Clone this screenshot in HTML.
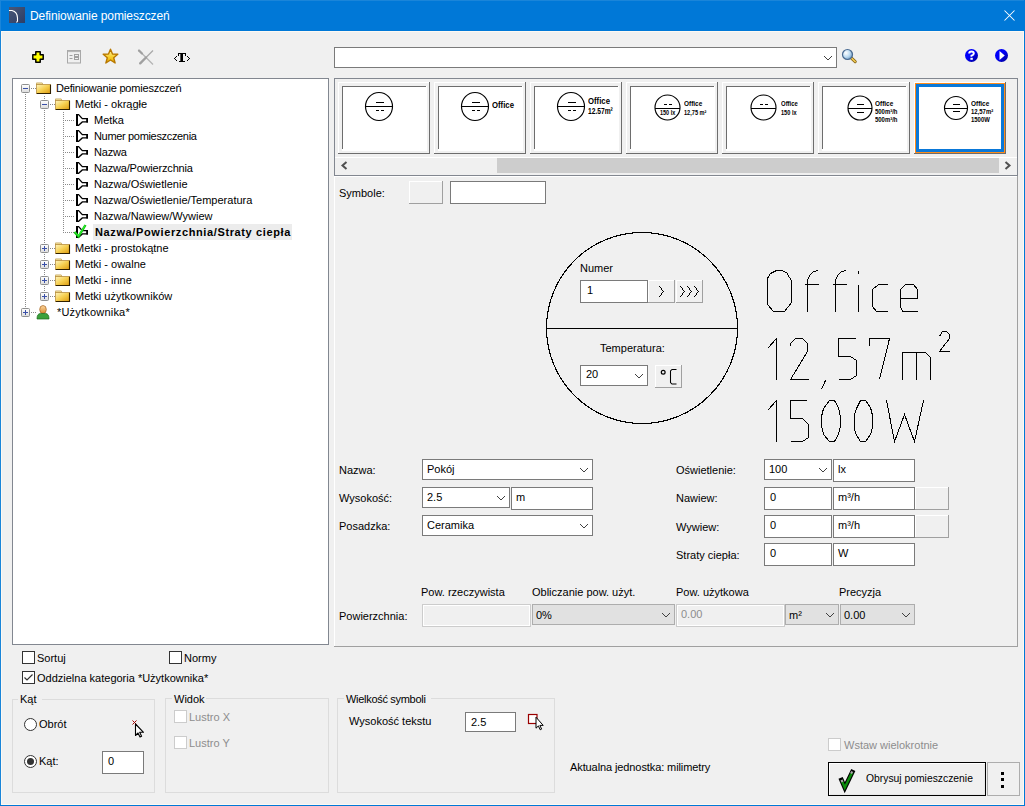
<!DOCTYPE html><html><head><meta charset="utf-8"><style>
html,body{margin:0;padding:0;}
body{width:1025px;height:806px;position:relative;overflow:hidden;background:#f0f0f0;font-family:"Liberation Sans",sans-serif;}
.t{position:absolute;white-space:nowrap;line-height:13px;font-family:"Liberation Sans",sans-serif;}
.b{position:absolute;box-sizing:border-box;}
svg.b{overflow:visible;}
</style></head><body>
<div class="b" style="left:0px;top:0px;width:1025px;height:31px;background:#0078d7;"></div>
<div class="b" style="left:1px;top:31px;width:1023px;height:774px;background:#fdf9f3;"></div>
<div class="b" style="left:2px;top:32px;width:1021px;height:772px;background:#f0f0f0;"></div>
<div class="b" style="left:0px;top:0px;width:1025px;height:1px;background:#1a85d9;"></div>
<div class="b" style="left:0px;top:0px;width:1px;height:806px;background:#1a85d9;"></div>
<div class="b" style="left:1024px;top:0px;width:1px;height:806px;background:#0078d7;"></div>
<div class="b" style="left:0px;top:805px;width:1025px;height:1px;background:#0078d7;"></div>
<svg class="b" style="left:9px;top:7px" width="17" height="17"><defs><linearGradient id="ai" x1="0" y1="0" x2="1" y2="1"><stop offset="0" stop-color="#4a5878"/><stop offset="1" stop-color="#2c3d66"/></linearGradient></defs><rect x="0" y="0" width="16" height="16" fill="url(#ai)"/><path d="M0 3.5 H3 Q8.5 5 8.5 11 V14 L7.5 15.5" fill="none" stroke="#fff" stroke-width="1.1"/></svg>
<div class="t" style="left:30px;top:10px;font-size:12px;color:#fff;letter-spacing:-0.1px">Definiowanie pomieszczeń</div>
<svg class="b" style="left:1004px;top:10px" width="11" height="11"><path d="M0.5 0.5 L10.5 10.5 M10.5 0.5 L0.5 10.5" stroke="#fff" stroke-width="1.05"/></svg>
<svg class="b" style="left:32px;top:51px" width="13" height="13"><path d="M3.8 0.8 H8.2 V3.8 H11.2 V8.2 H8.2 V11.2 H3.8 V8.2 H0.8 V3.8 H3.8 Z" fill="#ffff00" stroke="#000" stroke-width="1.5" stroke-linejoin="round"/></svg>
<svg class="b" style="left:67px;top:50px" width="15" height="14"><rect x="0.5" y="0.5" width="13" height="12.5" fill="none" stroke="#a8a8a8" stroke-width="1"/><path d="M1 1.5 H13" stroke="#b8b8b8" stroke-width="1.2"/><path d="M2.5 5.5 H5.5 M2.5 8.5 H5.5" stroke="#a0a0a0" stroke-width="1"/><rect x="7.5" y="4.5" width="4" height="2" fill="none" stroke="#a0a0a0" stroke-width="1"/><rect x="7.5" y="7.5" width="4" height="2" fill="none" stroke="#a0a0a0" stroke-width="1"/></svg>
<svg class="b" style="left:102px;top:48px" width="17" height="17"><defs><linearGradient id="st" x1="0" y1="0" x2="0" y2="1"><stop offset="0" stop-color="#fff8b0"/><stop offset="0.55" stop-color="#f8d030"/><stop offset="1" stop-color="#e8a800"/></linearGradient></defs><path d="M8.5 1.2 L10.5 6 L15.8 6.3 L11.7 9.7 L13.1 15 L8.5 12 L3.9 15 L5.3 9.7 L1.2 6.3 L6.5 6 Z" fill="url(#st)" stroke="#b87800" stroke-width="1.4" stroke-linejoin="round"/></svg>
<svg class="b" style="left:137px;top:49px" width="18" height="17"><path d="M2 1.5 L16 15.5" stroke="#b4b4b4" stroke-width="1.2"/><path d="M16 1.5 L9 8.5" stroke="#a8a8a8" stroke-width="1.2"/><path d="M9 8.5 L3.2 14.3" stroke="#a0a0a0" stroke-width="2.4" stroke-linecap="round"/><path d="M2 1.5 L5 4.5" stroke="#a0a0a0" stroke-width="2.2" stroke-linecap="round"/></svg>
<svg class="b" style="left:173px;top:52px" width="19" height="12" shape-rendering="crispEdges"><path d="M3 4h1v1h-1z M2 5h1v1h-1z M1 6h1v1h-1z M2 7h1v1h-1z M3 8h1v1h-1z" fill="#000"/><path d="M14 4h1v1h-1z M15 5h1v1h-1z M16 6h1v1h-1z M15 7h1v1h-1z M14 8h1v1h-1z" fill="#000"/><path d="M5 1h8v1h-8z M5 2h1v2h-1z M12 2h1v2h-1z M8 2h2v7h-2z M6 9h6v1h-6z" fill="#000"/><path d="M7 2h1v7h-1z" fill="#555"/></svg>
<div class="b" style="left:334px;top:47px;width:503px;height:21px;background:#fff;border:1px solid #7a7a7a;"></div>
<svg class="b" style="left:0;top:0" width="1025" height="806"><path d="M824 56h1v1h-1z M831 56h1v1h-1z M825 57h1v1h-1z M830 57h1v1h-1z M826 58h1v1h-1z M829 58h1v1h-1z M827 59h1v1h-1z M828 59h1v1h-1z " fill="#404040"/></svg>
<svg class="b" style="left:840px;top:48px" width="18" height="17"><defs><radialGradient id="mg" cx="0.35" cy="0.35" r="0.7"><stop offset="0" stop-color="#ffffff"/><stop offset="0.6" stop-color="#b8d8f0"/><stop offset="1" stop-color="#6f98c0"/></radialGradient></defs><path d="M11.2 9.8 L15.2 13.6" stroke="#7a5a10" stroke-width="3" stroke-linecap="round"/><path d="M11.2 9.8 L15.2 13.6" stroke="#f0c850" stroke-width="1.6" stroke-linecap="round"/><circle cx="7.5" cy="6.5" r="5" fill="url(#mg)" stroke="#4a6a90" stroke-width="1.2"/></svg>
<svg class="b" style="left:964px;top:48px" width="16" height="16"><defs><linearGradient id="hb" x1="0" y1="0" x2="1" y2="1"><stop offset="0.45" stop-color="#0000f8"/><stop offset="1" stop-color="#00008a"/></linearGradient></defs><circle cx="7.5" cy="7.5" r="6.5" fill="url(#hb)"/><path d="M5.2 5.6 Q5.2 3.4 7.5 3.4 Q9.8 3.4 9.8 5.4 Q9.8 6.8 7.5 7.6 V8.8" fill="none" stroke="#fff" stroke-width="2"/><rect x="6.4" y="9.8" width="2.4" height="2" fill="#fff"/></svg>
<svg class="b" style="left:994px;top:48px" width="16" height="16"><defs><linearGradient id="pb" x1="0" y1="0" x2="1" y2="1"><stop offset="0.45" stop-color="#0000f8"/><stop offset="1" stop-color="#00008a"/></linearGradient></defs><circle cx="7.5" cy="7.5" r="6.5" fill="url(#pb)"/><path d="M5.5 3 L10.8 7.5 L5.5 12 Z" fill="#fff"/></svg>
<div class="b" style="left:12px;top:78px;width:317px;height:567px;background:#fff;border:1px solid #828790;"></div>
<div class="b" style="left:25px;top:94px;width:1px;height:219px;background:repeating-linear-gradient(to bottom,#8a8a8a 0 1px,transparent 1px 2px)"></div>
<div class="b" style="left:44px;top:96px;width:1px;height:201px;background:repeating-linear-gradient(to bottom,#8a8a8a 0 1px,transparent 1px 2px)"></div>
<div class="b" style="left:63px;top:112px;width:1px;height:121px;background:repeating-linear-gradient(to bottom,#8a8a8a 0 1px,transparent 1px 2px)"></div>
<div class="b" style="left:31px;top:88px;width:5px;height:1px;background:repeating-linear-gradient(to right,#8a8a8a 0 1px,transparent 1px 2px)"></div>
<svg class="b" style="left:21px;top:84px" width="9" height="9"><defs><linearGradient id="eb88" x1="0" y1="0" x2="0" y2="1"><stop offset="0" stop-color="#ffffff"/><stop offset="1" stop-color="#dcdcdc"/></linearGradient></defs><rect x="0.5" y="0.5" width="8" height="8" rx="1" fill="url(#eb88)" stroke="#8e8f8f" stroke-width="1"/><path d="M2 4.5 H7" stroke="#3a50a8" stroke-width="1"/></svg>
<svg class="b" style="left:36px;top:82px" width="16" height="13"><defs><linearGradient id="fd" x1="0" y1="0" x2="1" y2="1"><stop offset="0" stop-color="#fff6c0"/><stop offset="0.5" stop-color="#f6cf50"/><stop offset="1" stop-color="#dc9a10"/></linearGradient></defs><path d="M0.5 2.5 V0.9 H6.2 L7 2.5 Z" fill="#f4e4a0" stroke="#c8a860" stroke-width="0.8"/><rect x="0.5" y="2.5" width="14" height="9" fill="url(#fd)" stroke="#b89040" stroke-width="0.8"/><path d="M14.5 2.8 V11.5 H0.8" fill="none" stroke="#302000" stroke-width="1.1"/></svg>
<div class="t" style="left:56px;top:82px;font-size:11px;color:#000;letter-spacing:-0.2px">Definiowanie pomieszczeń</div>
<div class="b" style="left:50px;top:104px;width:5px;height:1px;background:repeating-linear-gradient(to right,#8a8a8a 0 1px,transparent 1px 2px)"></div>
<svg class="b" style="left:40px;top:100px" width="9" height="9"><defs><linearGradient id="eb104" x1="0" y1="0" x2="0" y2="1"><stop offset="0" stop-color="#ffffff"/><stop offset="1" stop-color="#dcdcdc"/></linearGradient></defs><rect x="0.5" y="0.5" width="8" height="8" rx="1" fill="url(#eb104)" stroke="#8e8f8f" stroke-width="1"/><path d="M2 4.5 H7" stroke="#3a50a8" stroke-width="1"/></svg>
<svg class="b" style="left:55px;top:98px" width="16" height="13"><defs><linearGradient id="fd" x1="0" y1="0" x2="1" y2="1"><stop offset="0" stop-color="#fff6c0"/><stop offset="0.5" stop-color="#f6cf50"/><stop offset="1" stop-color="#dc9a10"/></linearGradient></defs><path d="M0.5 2.5 V0.9 H6.2 L7 2.5 Z" fill="#f4e4a0" stroke="#c8a860" stroke-width="0.8"/><rect x="0.5" y="2.5" width="14" height="9" fill="url(#fd)" stroke="#b89040" stroke-width="0.8"/><path d="M14.5 2.8 V11.5 H0.8" fill="none" stroke="#302000" stroke-width="1.1"/></svg>
<div class="t" style="left:75px;top:98px;font-size:11px;color:#000;">Metki - okrągłe</div>
<div class="b" style="left:65px;top:120px;width:9px;height:1px;background:repeating-linear-gradient(to right,#8a8a8a 0 1px,transparent 1px 2px)"></div>
<svg class="b" style="left:75px;top:113px" width="14" height="14"><path d="M1.8 1.65 H3.6 L7.3 5.65 H12.1 V8.9 H7.3 L3.6 12.35 H1.8 Z" fill="#fff" stroke="#000" stroke-width="1.3" stroke-linejoin="miter"/><rect x="1" y="1" width="2" height="12" fill="#000"/><rect x="11.4" y="5" width="1.6" height="4.6" fill="#000"/></svg>
<div class="t" style="left:94px;top:114px;font-size:11px;color:#000;">Metka</div>
<div class="b" style="left:65px;top:136px;width:9px;height:1px;background:repeating-linear-gradient(to right,#8a8a8a 0 1px,transparent 1px 2px)"></div>
<svg class="b" style="left:75px;top:129px" width="14" height="14"><path d="M1.8 1.65 H3.6 L7.3 5.65 H12.1 V8.9 H7.3 L3.6 12.35 H1.8 Z" fill="#fff" stroke="#000" stroke-width="1.3" stroke-linejoin="miter"/><rect x="1" y="1" width="2" height="12" fill="#000"/><rect x="11.4" y="5" width="1.6" height="4.6" fill="#000"/></svg>
<div class="t" style="left:94px;top:130px;font-size:11px;color:#000;letter-spacing:-0.33px">Numer pomieszczenia</div>
<div class="b" style="left:65px;top:152px;width:9px;height:1px;background:repeating-linear-gradient(to right,#8a8a8a 0 1px,transparent 1px 2px)"></div>
<svg class="b" style="left:75px;top:145px" width="14" height="14"><path d="M1.8 1.65 H3.6 L7.3 5.65 H12.1 V8.9 H7.3 L3.6 12.35 H1.8 Z" fill="#fff" stroke="#000" stroke-width="1.3" stroke-linejoin="miter"/><rect x="1" y="1" width="2" height="12" fill="#000"/><rect x="11.4" y="5" width="1.6" height="4.6" fill="#000"/></svg>
<div class="t" style="left:94px;top:146px;font-size:11px;color:#000;letter-spacing:-0.2px">Nazwa</div>
<div class="b" style="left:65px;top:168px;width:9px;height:1px;background:repeating-linear-gradient(to right,#8a8a8a 0 1px,transparent 1px 2px)"></div>
<svg class="b" style="left:75px;top:161px" width="14" height="14"><path d="M1.8 1.65 H3.6 L7.3 5.65 H12.1 V8.9 H7.3 L3.6 12.35 H1.8 Z" fill="#fff" stroke="#000" stroke-width="1.3" stroke-linejoin="miter"/><rect x="1" y="1" width="2" height="12" fill="#000"/><rect x="11.4" y="5" width="1.6" height="4.6" fill="#000"/></svg>
<div class="t" style="left:94px;top:162px;font-size:11px;color:#000;letter-spacing:-0.19px">Nazwa/Powierzchnia</div>
<div class="b" style="left:65px;top:184px;width:9px;height:1px;background:repeating-linear-gradient(to right,#8a8a8a 0 1px,transparent 1px 2px)"></div>
<svg class="b" style="left:75px;top:177px" width="14" height="14"><path d="M1.8 1.65 H3.6 L7.3 5.65 H12.1 V8.9 H7.3 L3.6 12.35 H1.8 Z" fill="#fff" stroke="#000" stroke-width="1.3" stroke-linejoin="miter"/><rect x="1" y="1" width="2" height="12" fill="#000"/><rect x="11.4" y="5" width="1.6" height="4.6" fill="#000"/></svg>
<div class="t" style="left:94px;top:178px;font-size:11px;color:#000;">Nazwa/Oświetlenie</div>
<div class="b" style="left:65px;top:200px;width:9px;height:1px;background:repeating-linear-gradient(to right,#8a8a8a 0 1px,transparent 1px 2px)"></div>
<svg class="b" style="left:75px;top:193px" width="14" height="14"><path d="M1.8 1.65 H3.6 L7.3 5.65 H12.1 V8.9 H7.3 L3.6 12.35 H1.8 Z" fill="#fff" stroke="#000" stroke-width="1.3" stroke-linejoin="miter"/><rect x="1" y="1" width="2" height="12" fill="#000"/><rect x="11.4" y="5" width="1.6" height="4.6" fill="#000"/></svg>
<div class="t" style="left:94px;top:194px;font-size:11px;color:#000;">Nazwa/Oświetlenie/Temperatura</div>
<div class="b" style="left:65px;top:216px;width:9px;height:1px;background:repeating-linear-gradient(to right,#8a8a8a 0 1px,transparent 1px 2px)"></div>
<svg class="b" style="left:75px;top:209px" width="14" height="14"><path d="M1.8 1.65 H3.6 L7.3 5.65 H12.1 V8.9 H7.3 L3.6 12.35 H1.8 Z" fill="#fff" stroke="#000" stroke-width="1.3" stroke-linejoin="miter"/><rect x="1" y="1" width="2" height="12" fill="#000"/><rect x="11.4" y="5" width="1.6" height="4.6" fill="#000"/></svg>
<div class="t" style="left:94px;top:210px;font-size:11px;color:#000;">Nazwa/Nawiew/Wywiew</div>
<div class="b" style="left:65px;top:232px;width:9px;height:1px;background:repeating-linear-gradient(to right,#8a8a8a 0 1px,transparent 1px 2px)"></div>
<div class="b" style="left:93px;top:224px;width:199px;height:16px;background:#ececec;"></div>
<svg class="b" style="left:75px;top:225px" width="14" height="14"><path d="M1.8 1.65 H3.6 L7.3 5.65 H12.1 V8.9 H7.3 L3.6 12.35 H1.8 Z" fill="#fff" stroke="#000" stroke-width="1.3" stroke-linejoin="miter"/><rect x="1" y="1" width="2" height="12" fill="#000"/><rect x="11.4" y="5" width="1.6" height="4.6" fill="#000"/></svg>
<svg class="b" style="left:73px;top:223px" width="16" height="16"><path d="M1.5 9 L5.5 13.5 L12.5 2" fill="none" stroke="#10c010" stroke-width="2.4" stroke-linecap="butt"/><path d="M2 9 L5.5 12.8 L12 2.5" fill="none" stroke="#30f030" stroke-width="1.1"/></svg>
<div class="t" style="left:95px;top:226px;font-size:11px;color:#000;font-weight:bold;letter-spacing:0.62px">Nazwa/Powierzchnia/Straty ciepła</div>
<div class="b" style="left:50px;top:248px;width:5px;height:1px;background:repeating-linear-gradient(to right,#8a8a8a 0 1px,transparent 1px 2px)"></div>
<svg class="b" style="left:40px;top:244px" width="9" height="9"><defs><linearGradient id="eb248" x1="0" y1="0" x2="0" y2="1"><stop offset="0" stop-color="#ffffff"/><stop offset="1" stop-color="#dcdcdc"/></linearGradient></defs><rect x="0.5" y="0.5" width="8" height="8" rx="1" fill="url(#eb248)" stroke="#8e8f8f" stroke-width="1"/><path d="M2 4.5 H7" stroke="#3a50a8" stroke-width="1"/><path d="M4.5 2 V7" stroke="#3a50a8" stroke-width="1"/></svg>
<svg class="b" style="left:55px;top:242px" width="16" height="13"><defs><linearGradient id="fd" x1="0" y1="0" x2="1" y2="1"><stop offset="0" stop-color="#fff6c0"/><stop offset="0.5" stop-color="#f6cf50"/><stop offset="1" stop-color="#dc9a10"/></linearGradient></defs><path d="M0.5 2.5 V0.9 H6.2 L7 2.5 Z" fill="#f4e4a0" stroke="#c8a860" stroke-width="0.8"/><rect x="0.5" y="2.5" width="14" height="9" fill="url(#fd)" stroke="#b89040" stroke-width="0.8"/><path d="M14.5 2.8 V11.5 H0.8" fill="none" stroke="#302000" stroke-width="1.1"/></svg>
<div class="t" style="left:75px;top:242px;font-size:11px;color:#000;">Metki - prostokątne</div>
<div class="b" style="left:50px;top:264px;width:5px;height:1px;background:repeating-linear-gradient(to right,#8a8a8a 0 1px,transparent 1px 2px)"></div>
<svg class="b" style="left:40px;top:260px" width="9" height="9"><defs><linearGradient id="eb264" x1="0" y1="0" x2="0" y2="1"><stop offset="0" stop-color="#ffffff"/><stop offset="1" stop-color="#dcdcdc"/></linearGradient></defs><rect x="0.5" y="0.5" width="8" height="8" rx="1" fill="url(#eb264)" stroke="#8e8f8f" stroke-width="1"/><path d="M2 4.5 H7" stroke="#3a50a8" stroke-width="1"/><path d="M4.5 2 V7" stroke="#3a50a8" stroke-width="1"/></svg>
<svg class="b" style="left:55px;top:258px" width="16" height="13"><defs><linearGradient id="fd" x1="0" y1="0" x2="1" y2="1"><stop offset="0" stop-color="#fff6c0"/><stop offset="0.5" stop-color="#f6cf50"/><stop offset="1" stop-color="#dc9a10"/></linearGradient></defs><path d="M0.5 2.5 V0.9 H6.2 L7 2.5 Z" fill="#f4e4a0" stroke="#c8a860" stroke-width="0.8"/><rect x="0.5" y="2.5" width="14" height="9" fill="url(#fd)" stroke="#b89040" stroke-width="0.8"/><path d="M14.5 2.8 V11.5 H0.8" fill="none" stroke="#302000" stroke-width="1.1"/></svg>
<div class="t" style="left:75px;top:258px;font-size:11px;color:#000;">Metki - owalne</div>
<div class="b" style="left:50px;top:280px;width:5px;height:1px;background:repeating-linear-gradient(to right,#8a8a8a 0 1px,transparent 1px 2px)"></div>
<svg class="b" style="left:40px;top:276px" width="9" height="9"><defs><linearGradient id="eb280" x1="0" y1="0" x2="0" y2="1"><stop offset="0" stop-color="#ffffff"/><stop offset="1" stop-color="#dcdcdc"/></linearGradient></defs><rect x="0.5" y="0.5" width="8" height="8" rx="1" fill="url(#eb280)" stroke="#8e8f8f" stroke-width="1"/><path d="M2 4.5 H7" stroke="#3a50a8" stroke-width="1"/><path d="M4.5 2 V7" stroke="#3a50a8" stroke-width="1"/></svg>
<svg class="b" style="left:55px;top:274px" width="16" height="13"><defs><linearGradient id="fd" x1="0" y1="0" x2="1" y2="1"><stop offset="0" stop-color="#fff6c0"/><stop offset="0.5" stop-color="#f6cf50"/><stop offset="1" stop-color="#dc9a10"/></linearGradient></defs><path d="M0.5 2.5 V0.9 H6.2 L7 2.5 Z" fill="#f4e4a0" stroke="#c8a860" stroke-width="0.8"/><rect x="0.5" y="2.5" width="14" height="9" fill="url(#fd)" stroke="#b89040" stroke-width="0.8"/><path d="M14.5 2.8 V11.5 H0.8" fill="none" stroke="#302000" stroke-width="1.1"/></svg>
<div class="t" style="left:75px;top:274px;font-size:11px;color:#000;">Metki - inne</div>
<div class="b" style="left:50px;top:296px;width:5px;height:1px;background:repeating-linear-gradient(to right,#8a8a8a 0 1px,transparent 1px 2px)"></div>
<svg class="b" style="left:40px;top:292px" width="9" height="9"><defs><linearGradient id="eb296" x1="0" y1="0" x2="0" y2="1"><stop offset="0" stop-color="#ffffff"/><stop offset="1" stop-color="#dcdcdc"/></linearGradient></defs><rect x="0.5" y="0.5" width="8" height="8" rx="1" fill="url(#eb296)" stroke="#8e8f8f" stroke-width="1"/><path d="M2 4.5 H7" stroke="#3a50a8" stroke-width="1"/><path d="M4.5 2 V7" stroke="#3a50a8" stroke-width="1"/></svg>
<svg class="b" style="left:55px;top:290px" width="16" height="13"><defs><linearGradient id="fd" x1="0" y1="0" x2="1" y2="1"><stop offset="0" stop-color="#fff6c0"/><stop offset="0.5" stop-color="#f6cf50"/><stop offset="1" stop-color="#dc9a10"/></linearGradient></defs><path d="M0.5 2.5 V0.9 H6.2 L7 2.5 Z" fill="#f4e4a0" stroke="#c8a860" stroke-width="0.8"/><rect x="0.5" y="2.5" width="14" height="9" fill="url(#fd)" stroke="#b89040" stroke-width="0.8"/><path d="M14.5 2.8 V11.5 H0.8" fill="none" stroke="#302000" stroke-width="1.1"/></svg>
<div class="t" style="left:75px;top:290px;font-size:11px;color:#000;">Metki użytkowników</div>
<div class="b" style="left:31px;top:312px;width:5px;height:1px;background:repeating-linear-gradient(to right,#8a8a8a 0 1px,transparent 1px 2px)"></div>
<svg class="b" style="left:21px;top:308px" width="9" height="9"><defs><linearGradient id="eb312" x1="0" y1="0" x2="0" y2="1"><stop offset="0" stop-color="#ffffff"/><stop offset="1" stop-color="#dcdcdc"/></linearGradient></defs><rect x="0.5" y="0.5" width="8" height="8" rx="1" fill="url(#eb312)" stroke="#8e8f8f" stroke-width="1"/><path d="M2 4.5 H7" stroke="#3a50a8" stroke-width="1"/><path d="M4.5 2 V7" stroke="#3a50a8" stroke-width="1"/></svg>
<svg class="b" style="left:36px;top:305px" width="15" height="15"><defs><linearGradient id="us" x1="0" y1="0" x2="0" y2="1"><stop offset="0" stop-color="#ffd9a0"/><stop offset="1" stop-color="#d88a30"/></linearGradient></defs><ellipse cx="7" cy="4.5" rx="3.3" ry="4" fill="url(#us)" stroke="#a06020" stroke-width="0.7"/><path d="M1 14 Q1 8.5 4.5 8.5 H9.5 Q13 8.5 13 14 Z" fill="#3aa03a" stroke="#1a6a1a" stroke-width="0.7"/></svg>
<div class="t" style="left:57px;top:306px;font-size:11px;color:#000;letter-spacing:0.2px">*Użytkownika*</div>
<svg class="b" style="left:22px;top:651px" width="13" height="13"><rect x="0.5" y="0.5" width="12" height="12" fill="#fff" stroke="#333333" stroke-width="1"/></svg>
<div class="t" style="left:37px;top:652px;font-size:11px;color:#000;">Sortuj</div>
<svg class="b" style="left:169px;top:651px" width="13" height="13"><rect x="0.5" y="0.5" width="12" height="12" fill="#fff" stroke="#333333" stroke-width="1"/></svg>
<div class="t" style="left:184px;top:652px;font-size:11px;color:#000;">Normy</div>
<svg class="b" style="left:22px;top:671px" width="13" height="13"><rect x="0.5" y="0.5" width="12" height="12" fill="#fff" stroke="#333333" stroke-width="1"/><path d="M2.5 6.5 L5 9 L10.5 3.5" fill="none" stroke="#333" stroke-width="1.2"/></svg>
<div class="t" style="left:37px;top:672px;font-size:11px;color:#000;">Oddzielna kategoria *Użytkownika*</div>
<div class="b" style="left:12px;top:699px;width:143px;height:94px;background:transparent;border:1px solid #dcdcdc;"></div>
<div class="b" style="left:18px;top:698px;width:24px;height:3px;background:#f0f0f0;"></div>
<div class="t" style="left:20px;top:693px;font-size:11px;color:#000;">Kąt</div>
<svg class="b" style="left:24px;top:718px" width="13" height="13"><circle cx="6.5" cy="6.5" r="6" fill="#fff" stroke="#333" stroke-width="1"/></svg>
<div class="t" style="left:39px;top:718px;font-size:11px;color:#000;">Obrót</div>
<svg class="b" style="left:24px;top:755px" width="13" height="13"><circle cx="6.5" cy="6.5" r="6" fill="#fff" stroke="#333" stroke-width="1"/><circle cx="6.5" cy="6.5" r="3.5" fill="#333"/></svg>
<div class="t" style="left:39px;top:755px;font-size:11px;color:#000;">Kąt:</div>
<div class="b" style="left:102px;top:751px;width:42px;height:23px;background:#fff;border:1px solid #7a7a7a;"></div>
<div class="t" style="left:108px;top:755px;font-size:11px;color:#000;">0</div>
<svg class="b" style="left:131px;top:719px" width="16" height="20"><path d="M1.5 1.5 L5.5 5.5 M5.5 1.5 L1.5 5.5" stroke="#a00000" stroke-width="1"/><path d="M4.5 5 V16.5 L7 14 L9 18 L10.6 17.2 L8.7 13.3 L12.5 13.3 Z" fill="#fff" stroke="#000" stroke-width="1.1" stroke-linejoin="round"/></svg>
<div class="b" style="left:165px;top:698px;width:164px;height:95px;background:transparent;border:1px solid #dcdcdc;"></div>
<div class="b" style="left:172px;top:697px;width:34px;height:3px;background:#f0f0f0;"></div>
<div class="t" style="left:174px;top:693px;font-size:11px;color:#000;">Widok</div>
<svg class="b" style="left:174px;top:710px" width="13" height="13"><rect x="0.5" y="0.5" width="12" height="12" fill="#fff" stroke="#cccccc" stroke-width="1"/></svg>
<div class="t" style="left:189px;top:711px;font-size:11px;color:#8d8d8d;">Lustro X</div>
<svg class="b" style="left:174px;top:736px" width="13" height="13"><rect x="0.5" y="0.5" width="12" height="12" fill="#fff" stroke="#cccccc" stroke-width="1"/></svg>
<div class="t" style="left:189px;top:737px;font-size:11px;color:#8d8d8d;">Lustro Y</div>
<div class="b" style="left:337px;top:698px;width:218px;height:95px;background:transparent;border:1px solid #dcdcdc;"></div>
<div class="b" style="left:344px;top:697px;width:87px;height:3px;background:#f0f0f0;"></div>
<div class="t" style="left:346px;top:693px;font-size:11px;color:#000;letter-spacing:-0.3px">Wielkość symboli</div>
<div class="t" style="left:349px;top:715px;font-size:11px;color:#000;">Wysokość tekstu</div>
<div class="b" style="left:465px;top:712px;width:51px;height:20px;background:#fff;border:1px solid #7a7a7a;"></div>
<div class="t" style="left:471px;top:716px;font-size:11px;color:#000;">2.5</div>
<svg class="b" style="left:527px;top:713px" width="18" height="18"><rect x="1.5" y="1.5" width="8.5" height="9" fill="#fff" stroke="#9a0000" stroke-width="1.2"/><path d="M9 4.2 V15.2 L11.4 12.9 L13.2 16.8 L14.6 16.1 L12.9 12.4 L16.2 12.4 Z" fill="#fff" stroke="#000" stroke-width="1"/></svg>
<div class="t" style="left:570px;top:761px;font-size:11px;color:#000;letter-spacing:-0.1px">Aktualna jednostka: milimetry</div>
<svg class="b" style="left:828px;top:738px" width="13" height="13"><rect x="0.5" y="0.5" width="12" height="12" fill="#fff" stroke="#cccccc" stroke-width="1"/></svg>
<div class="t" style="left:844px;top:739px;font-size:11px;color:#8d8d8d;">Wstaw wielokrotnie</div>
<div class="b" style="left:828px;top:762px;width:158px;height:34px;border:1px solid #000;background:#f0f0f0;box-shadow:inset 1px 1px 0 #fff, inset -1px -1px 0 #e8e8e8"></div>
<svg class="b" style="left:836px;top:768px" width="22" height="24"><path d="M5.5 12 L8.8 19.6 L16.3 4" fill="none" stroke="#000" stroke-width="4.6" stroke-linecap="square" stroke-linejoin="miter"/><path d="M5.5 12 L8.8 19.6 L16.3 4" fill="none" stroke="#0a8c0a" stroke-width="2.4" stroke-linecap="butt" stroke-linejoin="miter"/><path d="M15 5.5 L16.3 3.5 M5.5 12 L6.5 14" stroke="#b0a0b0" stroke-width="2"/></svg>
<div class="t" style="left:866px;top:772px;font-size:11px;color:#000;transform:scaleX(0.94);transform-origin:0 0">Obrysuj pomieszczenie</div>
<div class="b" style="left:987px;top:762px;width:33px;height:34px;background:#f0f0f0;border:1px solid #adadad;"></div>
<div class="b" style="left:1001px;top:772px;width:3px;height:3px;background:#000"></div>
<div class="b" style="left:1001px;top:778px;width:3px;height:3px;background:#000"></div>
<div class="b" style="left:1001px;top:785px;width:3px;height:3px;background:#000"></div>
<div class="b" style="left:334px;top:78px;width:684px;height:98px;background:#f0f0f0;border:1px solid #828790;"></div>
<div class="b" style="left:338px;top:82px;width:92px;height:72px;background:#f0f0f0;"></div>
<div class="b" style="left:338px;top:82px;width:91px;height:1px;background:#ffffff;"></div>
<div class="b" style="left:338px;top:82px;width:1px;height:71px;background:#ffffff;"></div>
<div class="b" style="left:338px;top:153px;width:92px;height:1px;background:#6d6d6d;"></div>
<div class="b" style="left:429px;top:82px;width:1px;height:72px;background:#6d6d6d;"></div>
<div class="b" style="left:342px;top:86px;width:85px;height:65px;background:#ffffff;"></div>
<div class="b" style="left:342px;top:86px;width:84px;height:1px;background:#6d6d6d;"></div>
<div class="b" style="left:342px;top:86px;width:1px;height:63px;background:#6d6d6d;"></div>
<div class="b" style="left:434px;top:82px;width:92px;height:72px;background:#f0f0f0;"></div>
<div class="b" style="left:434px;top:82px;width:91px;height:1px;background:#ffffff;"></div>
<div class="b" style="left:434px;top:82px;width:1px;height:71px;background:#ffffff;"></div>
<div class="b" style="left:434px;top:153px;width:92px;height:1px;background:#6d6d6d;"></div>
<div class="b" style="left:525px;top:82px;width:1px;height:72px;background:#6d6d6d;"></div>
<div class="b" style="left:438px;top:86px;width:85px;height:65px;background:#ffffff;"></div>
<div class="b" style="left:438px;top:86px;width:84px;height:1px;background:#6d6d6d;"></div>
<div class="b" style="left:438px;top:86px;width:1px;height:63px;background:#6d6d6d;"></div>
<div class="b" style="left:530px;top:82px;width:92px;height:72px;background:#f0f0f0;"></div>
<div class="b" style="left:530px;top:82px;width:91px;height:1px;background:#ffffff;"></div>
<div class="b" style="left:530px;top:82px;width:1px;height:71px;background:#ffffff;"></div>
<div class="b" style="left:530px;top:153px;width:92px;height:1px;background:#6d6d6d;"></div>
<div class="b" style="left:621px;top:82px;width:1px;height:72px;background:#6d6d6d;"></div>
<div class="b" style="left:534px;top:86px;width:85px;height:65px;background:#ffffff;"></div>
<div class="b" style="left:534px;top:86px;width:84px;height:1px;background:#6d6d6d;"></div>
<div class="b" style="left:534px;top:86px;width:1px;height:63px;background:#6d6d6d;"></div>
<div class="b" style="left:626px;top:82px;width:92px;height:72px;background:#f0f0f0;"></div>
<div class="b" style="left:626px;top:82px;width:91px;height:1px;background:#ffffff;"></div>
<div class="b" style="left:626px;top:82px;width:1px;height:71px;background:#ffffff;"></div>
<div class="b" style="left:626px;top:153px;width:92px;height:1px;background:#6d6d6d;"></div>
<div class="b" style="left:717px;top:82px;width:1px;height:72px;background:#6d6d6d;"></div>
<div class="b" style="left:630px;top:86px;width:85px;height:65px;background:#ffffff;"></div>
<div class="b" style="left:630px;top:86px;width:84px;height:1px;background:#6d6d6d;"></div>
<div class="b" style="left:630px;top:86px;width:1px;height:63px;background:#6d6d6d;"></div>
<div class="b" style="left:722px;top:82px;width:92px;height:72px;background:#f0f0f0;"></div>
<div class="b" style="left:722px;top:82px;width:91px;height:1px;background:#ffffff;"></div>
<div class="b" style="left:722px;top:82px;width:1px;height:71px;background:#ffffff;"></div>
<div class="b" style="left:722px;top:153px;width:92px;height:1px;background:#6d6d6d;"></div>
<div class="b" style="left:813px;top:82px;width:1px;height:72px;background:#6d6d6d;"></div>
<div class="b" style="left:726px;top:86px;width:85px;height:65px;background:#ffffff;"></div>
<div class="b" style="left:726px;top:86px;width:84px;height:1px;background:#6d6d6d;"></div>
<div class="b" style="left:726px;top:86px;width:1px;height:63px;background:#6d6d6d;"></div>
<div class="b" style="left:818px;top:82px;width:92px;height:72px;background:#f0f0f0;"></div>
<div class="b" style="left:818px;top:82px;width:91px;height:1px;background:#ffffff;"></div>
<div class="b" style="left:818px;top:82px;width:1px;height:71px;background:#ffffff;"></div>
<div class="b" style="left:818px;top:153px;width:92px;height:1px;background:#6d6d6d;"></div>
<div class="b" style="left:909px;top:82px;width:1px;height:72px;background:#6d6d6d;"></div>
<div class="b" style="left:822px;top:86px;width:85px;height:65px;background:#ffffff;"></div>
<div class="b" style="left:822px;top:86px;width:84px;height:1px;background:#6d6d6d;"></div>
<div class="b" style="left:822px;top:86px;width:1px;height:63px;background:#6d6d6d;"></div>
<div class="b" style="left:914px;top:82px;width:92px;height:72px;background:#f0f0f0;"></div>
<div class="b" style="left:914px;top:82px;width:91px;height:1px;background:#ffffff;"></div>
<div class="b" style="left:914px;top:82px;width:1px;height:71px;background:#ffffff;"></div>
<div class="b" style="left:914px;top:153px;width:92px;height:1px;background:#6d6d6d;"></div>
<div class="b" style="left:1005px;top:82px;width:1px;height:72px;background:#6d6d6d;"></div>
<div class="b" style="left:915px;top:83px;width:90px;height:70px;background:#ff8c1a;"></div>
<div class="b" style="left:916px;top:84px;width:88px;height:68px;background:#0a78d8;"></div>
<div class="b" style="left:919px;top:87px;width:82px;height:62px;background:#ffffff;"></div>
<svg class="b" style="left:0;top:0" width="1025" height="200"><ellipse cx="379" cy="106.5" rx="13.5" ry="14" fill="none" stroke="#000" stroke-width="1.15"/><path d="M365 106.5 H393" stroke="#000" stroke-width="1" shape-rendering="crispEdges"/></svg>
<div class="b" style="left:376px;top:102px;width:8px;height:1px;background:#000;"></div>
<div class="b" style="left:376px;top:110px;width:3px;height:1px;background:#000;"></div>
<div class="b" style="left:381px;top:110px;width:3px;height:1px;background:#000;"></div>
<svg class="b" style="left:0;top:0" width="1025" height="200"><ellipse cx="475" cy="106.5" rx="13.5" ry="14" fill="none" stroke="#000" stroke-width="1.15"/><path d="M461 106.5 H489" stroke="#000" stroke-width="1" shape-rendering="crispEdges"/></svg>
<div class="b" style="left:472px;top:102px;width:8px;height:1px;background:#000;"></div>
<div class="b" style="left:472px;top:110px;width:3px;height:1px;background:#000;"></div>
<div class="b" style="left:477px;top:110px;width:3px;height:1px;background:#000;"></div>
<div class="t" style="left:492px;top:101px;font-size:9px;line-height:9px;font-weight:bold;transform:scaleX(0.86);transform-origin:0 0">Office</div>
<svg class="b" style="left:0;top:0" width="1025" height="200"><ellipse cx="571" cy="106.5" rx="13.5" ry="14" fill="none" stroke="#000" stroke-width="1.15"/><path d="M557 106.5 H585" stroke="#000" stroke-width="1" shape-rendering="crispEdges"/></svg>
<div class="b" style="left:568px;top:102px;width:8px;height:1px;background:#000;"></div>
<div class="b" style="left:568px;top:110px;width:3px;height:1px;background:#000;"></div>
<div class="b" style="left:573px;top:110px;width:3px;height:1px;background:#000;"></div>
<div class="t" style="left:588px;top:97px;font-size:9px;line-height:9px;font-weight:bold;transform:scaleX(0.86);transform-origin:0 0">Office</div>
<div class="t" style="left:588px;top:107px;font-size:9px;line-height:9px;font-weight:bold;transform:scaleX(0.74);transform-origin:0 0">12.57m²</div>
<svg class="b" style="left:0;top:0" width="1025" height="200"><ellipse cx="667.5" cy="107.5" rx="12.5" ry="12.5" fill="none" stroke="#000" stroke-width="1.15"/><path d="M655 108.5 H680" stroke="#000" stroke-width="1" shape-rendering="crispEdges"/></svg>
<div class="b" style="left:664px;top:104px;width:3px;height:1px;background:#000;"></div>
<div class="b" style="left:669px;top:104px;width:3px;height:1px;background:#000;"></div>
<div class="t" style="left:660px;top:109px;font-size:7px;line-height:7px;font-weight:bold;transform:scaleX(0.78);transform-origin:0 0">150 lx</div>
<div class="t" style="left:684px;top:100px;font-size:7px;line-height:7px;font-weight:bold;transform:scaleX(0.92);transform-origin:0 0">Office</div>
<div class="t" style="left:684px;top:109px;font-size:7px;line-height:7px;font-weight:bold;transform:scaleX(0.8);transform-origin:0 0">12,75 m²</div>
<svg class="b" style="left:0;top:0" width="1025" height="200"><ellipse cx="763.5" cy="107.5" rx="12.5" ry="12.5" fill="none" stroke="#000" stroke-width="1.15"/><path d="M751 108.5 H776" stroke="#000" stroke-width="1" shape-rendering="crispEdges"/></svg>
<div class="b" style="left:760px;top:104px;width:3px;height:1px;background:#000;"></div>
<div class="b" style="left:765px;top:104px;width:3px;height:1px;background:#000;"></div>
<div class="t" style="left:781px;top:100px;font-size:7px;line-height:7px;font-weight:bold;transform:scaleX(0.85);transform-origin:0 0">Office</div>
<div class="t" style="left:781px;top:109px;font-size:7px;line-height:7px;font-weight:bold;transform:scaleX(0.8);transform-origin:0 0">150 lx</div>
<svg class="b" style="left:0;top:0" width="1025" height="200"><ellipse cx="860" cy="108" rx="12" ry="12" fill="none" stroke="#000" stroke-width="1.15"/><path d="M848 108.5 H872" stroke="#000" stroke-width="1" shape-rendering="crispEdges"/></svg>
<div class="b" style="left:857px;top:104px;width:7px;height:1px;background:#000;"></div>
<div class="b" style="left:857px;top:112px;width:7px;height:1px;background:#000;"></div>
<div class="t" style="left:875px;top:100px;font-size:7px;line-height:7px;font-weight:bold;transform:scaleX(0.92);transform-origin:0 0">Office</div>
<div class="t" style="left:875px;top:108px;font-size:7px;line-height:7px;font-weight:bold;transform:scaleX(0.85);transform-origin:0 0">500m³/h</div>
<div class="t" style="left:875px;top:116px;font-size:7px;line-height:7px;font-weight:bold;transform:scaleX(0.85);transform-origin:0 0">500m³/h</div>
<svg class="b" style="left:0;top:0" width="1025" height="200"><ellipse cx="956" cy="108" rx="11.5" ry="11.5" fill="none" stroke="#000" stroke-width="1.15"/><path d="M944 108.5 H968" stroke="#000" stroke-width="1" shape-rendering="crispEdges"/></svg>
<div class="b" style="left:953px;top:104px;width:7px;height:1px;background:#000;"></div>
<div class="b" style="left:953px;top:111px;width:7px;height:1px;background:#000;"></div>
<div class="t" style="left:971px;top:100px;font-size:7px;line-height:7px;font-weight:bold;transform:scaleX(0.92);transform-origin:0 0">Office</div>
<div class="t" style="left:971px;top:108px;font-size:7px;line-height:7px;font-weight:bold;transform:scaleX(0.85);transform-origin:0 0">12,57m²</div>
<div class="t" style="left:971px;top:116px;font-size:7px;line-height:7px;font-weight:bold;transform:scaleX(0.85);transform-origin:0 0">1500W</div>
<div class="b" style="left:335px;top:157px;width:682px;height:1px;background:#ffffff;"></div>
<div class="b" style="left:335px;top:158px;width:682px;height:17px;background:#f0f0f0;"></div>
<div class="b" style="left:497px;top:158px;width:502px;height:15px;background:#cdcdcd;"></div>
<svg class="b" style="left:340px;top:161px" width="9" height="9"><path d="M6.5 1 L2.5 4.5 L6.5 8" fill="none" stroke="#505050" stroke-width="2"/></svg>
<svg class="b" style="left:1004px;top:161px" width="9" height="9"><path d="M1.5 1 L5.5 4.5 L1.5 8" fill="none" stroke="#505050" stroke-width="2"/></svg>
<div class="b" style="left:334px;top:176px;width:684px;height:471px;background:#a0a0a0;"></div>
<div class="b" style="left:334px;top:176px;width:683px;height:470px;background:#ffffff;"></div>
<div class="b" style="left:335px;top:177px;width:682px;height:469px;background:#f0f0f0;"></div>
<div class="t" style="left:339px;top:187px;font-size:11px;color:#000;">Symbole:</div>
<div class="b" style="left:409px;top:181px;width:34px;height:23px;background:#a0a0a0;"></div>
<div class="b" style="left:409px;top:181px;width:33px;height:22px;background:#ffffff;"></div>
<div class="b" style="left:410px;top:182px;width:32px;height:21px;background:#f0f0f0;"></div>
<div class="b" style="left:450px;top:181px;width:96px;height:23px;background:#fff;border:1px solid #7a7a7a;"></div>
<svg class="b" style="left:0;top:0" width="1025" height="806"><circle cx="642" cy="328" r="95.5" fill="none" stroke="#000" stroke-width="1.1" shape-rendering="crispEdges"/><path d="M546 328.5 H738" stroke="#000" stroke-width="1" shape-rendering="crispEdges"/></svg>
<div class="t" style="left:580px;top:262px;font-size:11px;color:#000;">Numer</div>
<div class="b" style="left:580px;top:280px;width:68px;height:23px;background:#fff;border:1px solid #7a7a7a;"></div>
<div class="t" style="left:587px;top:284px;font-size:11px;color:#000;">1</div>
<div class="b" style="left:648px;top:280px;width:27px;height:23px;background:#a0a0a0;"></div>
<div class="b" style="left:648px;top:280px;width:26px;height:22px;background:#ffffff;"></div>
<div class="b" style="left:649px;top:281px;width:25px;height:21px;background:#f0f0f0;"></div>
<div class="b" style="left:676px;top:280px;width:27px;height:23px;background:#a0a0a0;"></div>
<div class="b" style="left:676px;top:280px;width:26px;height:22px;background:#ffffff;"></div>
<div class="b" style="left:677px;top:281px;width:25px;height:21px;background:#f0f0f0;"></div>
<svg class="b" style="left:0;top:0" width="1025" height="806"><path d="M659 286h1v1h-1z M660 287h1v1h-1z M661 288h1v1h-1z M661 289h1v1h-1z M662 290h1v1h-1z M663 291h1v1h-1z M662 292h1v1h-1z M661 293h1v1h-1z M661 294h1v1h-1z M660 295h1v1h-1z M659 296h1v1h-1z M680 286h1v1h-1z M681 287h1v1h-1z M682 288h1v1h-1z M682 289h1v1h-1z M683 290h1v1h-1z M684 291h1v1h-1z M683 292h1v1h-1z M682 293h1v1h-1z M682 294h1v1h-1z M681 295h1v1h-1z M680 296h1v1h-1z M687 286h1v1h-1z M688 287h1v1h-1z M689 288h1v1h-1z M689 289h1v1h-1z M690 290h1v1h-1z M691 291h1v1h-1z M690 292h1v1h-1z M689 293h1v1h-1z M689 294h1v1h-1z M688 295h1v1h-1z M687 296h1v1h-1z M694 286h1v1h-1z M695 287h1v1h-1z M696 288h1v1h-1z M696 289h1v1h-1z M697 290h1v1h-1z M698 291h1v1h-1z M697 292h1v1h-1z M696 293h1v1h-1z M696 294h1v1h-1z M695 295h1v1h-1z M694 296h1v1h-1z " fill="#000"/></svg>
<div class="t" style="left:600px;top:342px;font-size:11px;color:#000;">Temperatura:</div>
<div class="b" style="left:580px;top:365px;width:68px;height:21px;background:#fff;border:1px solid #7a7a7a;"></div>
<div class="t" style="left:586px;top:368px;font-size:11px;color:#000;">20</div>
<svg class="b" style="left:0;top:0" width="1025" height="806"><path d="M635 374h1v1h-1z M642 374h1v1h-1z M636 375h1v1h-1z M641 375h1v1h-1z M637 376h1v1h-1z M640 376h1v1h-1z M638 377h1v1h-1z M639 377h1v1h-1z " fill="#404040"/></svg>
<div class="b" style="left:655px;top:365px;width:27px;height:23px;background:#a0a0a0;"></div>
<div class="b" style="left:655px;top:365px;width:26px;height:22px;background:#ffffff;"></div>
<div class="b" style="left:656px;top:366px;width:25px;height:21px;background:#f0f0f0;"></div>
<svg class="b" style="left:655px;top:365px" width="27" height="23"><circle cx="8.2" cy="7.2" r="1.9" fill="none" stroke="#000" stroke-width="1.2"/><path d="M21.5 4.5 H17 L15.5 6 V17.5 L17 19 H21.5" fill="none" stroke="#000" stroke-width="1.05"/></svg>
<div class="t" style="left:339px;top:464px;font-size:11px;color:#000;">Nazwa:</div>
<div class="b" style="left:422px;top:459px;width:171px;height:21px;background:#fff;border:1px solid #7a7a7a;"></div>
<div class="t" style="left:427px;top:463px;font-size:11px;color:#000;">Pokój</div>
<svg class="b" style="left:0;top:0" width="1025" height="806"><path d="M580 468h1v1h-1z M587 468h1v1h-1z M581 469h1v1h-1z M586 469h1v1h-1z M582 470h1v1h-1z M585 470h1v1h-1z M583 471h1v1h-1z M584 471h1v1h-1z " fill="#404040"/></svg>
<div class="t" style="left:339px;top:492px;font-size:11px;color:#000;">Wysokość:</div>
<div class="b" style="left:422px;top:487px;width:88px;height:21px;background:#fff;border:1px solid #7a7a7a;"></div>
<div class="t" style="left:427px;top:491px;font-size:11px;color:#000;">2.5</div>
<svg class="b" style="left:0;top:0" width="1025" height="806"><path d="M497 496h1v1h-1z M504 496h1v1h-1z M498 497h1v1h-1z M503 497h1v1h-1z M499 498h1v1h-1z M502 498h1v1h-1z M500 499h1v1h-1z M501 499h1v1h-1z " fill="#404040"/></svg>
<div class="b" style="left:511px;top:487px;width:82px;height:23px;background:#fff;border:1px solid #7a7a7a;"></div>
<div class="t" style="left:516px;top:491px;font-size:11px;color:#000;">m</div>
<div class="t" style="left:339px;top:520px;font-size:11px;color:#000;">Posadzka:</div>
<div class="b" style="left:422px;top:515px;width:171px;height:21px;background:#fff;border:1px solid #7a7a7a;"></div>
<div class="t" style="left:427px;top:519px;font-size:11px;color:#000;">Ceramika</div>
<svg class="b" style="left:0;top:0" width="1025" height="806"><path d="M580 524h1v1h-1z M587 524h1v1h-1z M581 525h1v1h-1z M586 525h1v1h-1z M582 526h1v1h-1z M585 526h1v1h-1z M583 527h1v1h-1z M584 527h1v1h-1z " fill="#404040"/></svg>
<div class="t" style="left:676px;top:464px;font-size:11px;color:#000;">Oświetlenie:</div>
<div class="b" style="left:764px;top:459px;width:68px;height:21px;background:#fff;border:1px solid #7a7a7a;"></div>
<div class="t" style="left:769px;top:463px;font-size:11px;color:#000;">100</div>
<svg class="b" style="left:0;top:0" width="1025" height="806"><path d="M819 468h1v1h-1z M826 468h1v1h-1z M820 469h1v1h-1z M825 469h1v1h-1z M821 470h1v1h-1z M824 470h1v1h-1z M822 471h1v1h-1z M823 471h1v1h-1z " fill="#404040"/></svg>
<div class="b" style="left:833px;top:459px;width:82px;height:23px;background:#fff;border:1px solid #7a7a7a;"></div>
<div class="t" style="left:838px;top:463px;font-size:11px;color:#000;">lx</div>
<div class="t" style="left:676px;top:492px;font-size:11px;color:#000;">Nawiew:</div>
<div class="b" style="left:764px;top:487px;width:68px;height:23px;background:#fff;border:1px solid #7a7a7a;"></div>
<div class="t" style="left:770px;top:491px;font-size:11px;color:#000;">0</div>
<div class="b" style="left:833px;top:487px;width:82px;height:23px;background:#fff;border:1px solid #7a7a7a;"></div>
<div class="t" style="left:838px;top:491px;font-size:11px;color:#000;">m³/h</div>
<div class="b" style="left:915px;top:487px;width:34px;height:23px;background:#a0a0a0;"></div>
<div class="b" style="left:915px;top:487px;width:33px;height:22px;background:#ffffff;"></div>
<div class="b" style="left:916px;top:488px;width:32px;height:21px;background:#f0f0f0;"></div>
<div class="t" style="left:676px;top:521px;font-size:11px;color:#000;">Wywiew:</div>
<div class="b" style="left:764px;top:515px;width:68px;height:23px;background:#fff;border:1px solid #7a7a7a;"></div>
<div class="t" style="left:770px;top:519px;font-size:11px;color:#000;">0</div>
<div class="b" style="left:833px;top:515px;width:82px;height:23px;background:#fff;border:1px solid #7a7a7a;"></div>
<div class="t" style="left:838px;top:519px;font-size:11px;color:#000;">m³/h</div>
<div class="b" style="left:915px;top:515px;width:34px;height:23px;background:#a0a0a0;"></div>
<div class="b" style="left:915px;top:515px;width:33px;height:22px;background:#ffffff;"></div>
<div class="b" style="left:916px;top:516px;width:32px;height:21px;background:#f0f0f0;"></div>
<div class="t" style="left:676px;top:549px;font-size:11px;color:#000;">Straty ciepła:</div>
<div class="b" style="left:764px;top:543px;width:68px;height:23px;background:#fff;border:1px solid #7a7a7a;"></div>
<div class="t" style="left:770px;top:547px;font-size:11px;color:#000;">0</div>
<div class="b" style="left:833px;top:543px;width:82px;height:23px;background:#fff;border:1px solid #7a7a7a;"></div>
<div class="t" style="left:838px;top:547px;font-size:11px;color:#000;">W</div>
<div class="t" style="left:421px;top:586px;font-size:11px;color:#000;">Pow. rzeczywista</div>
<div class="t" style="left:532px;top:586px;font-size:11px;color:#000;">Obliczanie pow. użyt.</div>
<div class="t" style="left:676px;top:586px;font-size:11px;color:#000;">Pow. użytkowa</div>
<div class="t" style="left:839px;top:586px;font-size:11px;color:#000;">Precyzja</div>
<div class="t" style="left:339px;top:610px;font-size:11px;color:#000;">Powierzchnia:</div>
<div class="b" style="left:422px;top:604px;width:109px;height:23px;background:#f0f0f0;border:1px solid #cccccc;box-shadow:inset 0 0 0 1px #fff"></div>
<div class="b" style="left:532px;top:604px;width:143px;height:21px;background:#e1e1e1;border:1px solid #adadad;"></div>
<div class="t" style="left:536px;top:609px;font-size:11px;color:#000;">0%</div>
<svg class="b" style="left:0;top:0" width="1025" height="806"><path d="M662 613h1v1h-1z M669 613h1v1h-1z M663 614h1v1h-1z M668 614h1v1h-1z M664 615h1v1h-1z M667 615h1v1h-1z M665 616h1v1h-1z M666 616h1v1h-1z " fill="#404040"/></svg>
<div class="b" style="left:676px;top:604px;width:109px;height:23px;background:#f0f0f0;border:1px solid #cccccc;box-shadow:inset 0 0 0 1px #fff"></div>
<div class="t" style="left:681px;top:608px;font-size:11px;color:#8d8d8d;">0.00</div>
<div class="b" style="left:785px;top:604px;width:54px;height:21px;background:#e1e1e1;border:1px solid #adadad;"></div>
<div class="t" style="left:789px;top:609px;font-size:11px;color:#000;">m²</div>
<svg class="b" style="left:0;top:0" width="1025" height="806"><path d="M826 613h1v1h-1z M833 613h1v1h-1z M827 614h1v1h-1z M832 614h1v1h-1z M828 615h1v1h-1z M831 615h1v1h-1z M829 616h1v1h-1z M830 616h1v1h-1z " fill="#404040"/></svg>
<div class="b" style="left:840px;top:604px;width:75px;height:21px;background:#e1e1e1;border:1px solid #adadad;"></div>
<div class="t" style="left:844px;top:609px;font-size:11px;color:#000;">0.00</div>
<svg class="b" style="left:0;top:0" width="1025" height="806"><path d="M902 613h1v1h-1z M909 613h1v1h-1z M903 614h1v1h-1z M908 614h1v1h-1z M904 615h1v1h-1z M907 615h1v1h-1z M905 616h1v1h-1z M906 616h1v1h-1z " fill="#404040"/></svg>
<svg class="b" style="left:0;top:0" width="1025" height="806"><g transform="translate(0.5,0.5)" fill="none" stroke="#000" stroke-width="1" shape-rendering="crispEdges"><path d="M767 278 L770 273 L776 270 L781 270 L786 272 L789 277 L791 280 L791 302 L784 311 L773 311 L767 304 Z"/><path d="M807 311 V280 L809 275 L813 271 L818 270 M804 284 H818"/><path d="M835 311 V280 L837 275 L841 271 L846 270 M832 284 H846"/><path d="M858 270 V273 M858 284 V311"/><path d="M887 284 H878 L872 289 V306 L876 311 H887"/><path d="M900 298 H917 V289 L913 284 H905 L900 289 V306 L902 311 H917"/><path d="M767 348 L776 338 V379"/><path d="M790 345 V343 L795 338 H802 L807 343 V351 L790 379 H808"/><path d="M825 380 L821 389"/><path d="M855 338 H838 V356 H850 L856 360 V375 L850 379 H838"/><path d="M869 345 V338 H889 L879 379"/><path d="M902 379 V352 H925 L930 357 V379 M916 352 V379"/><path d="M939 336 L942 331 H946 L949 334 V338 L939 351 H949"/><path d="M767 410 L776 400 V441"/><path d="M806 400 H790 V418 H802 L808 424 V437 L802 441 H790"/><path d="M829 400 H834 L838 407 L840 417 V425 L838 434 L834 441 H829 L823 434 L821 425 V416 L823 408 Z"/><path d="M860 400 H865 L870 407 L872 415 V427 L870 434 L865 441 H860 L855 433 L854 427 V414 L856 408 Z"/><path d="M886 400 L894 441 L904 414 L914 441 L923 400"/></g></svg>
</body></html>
